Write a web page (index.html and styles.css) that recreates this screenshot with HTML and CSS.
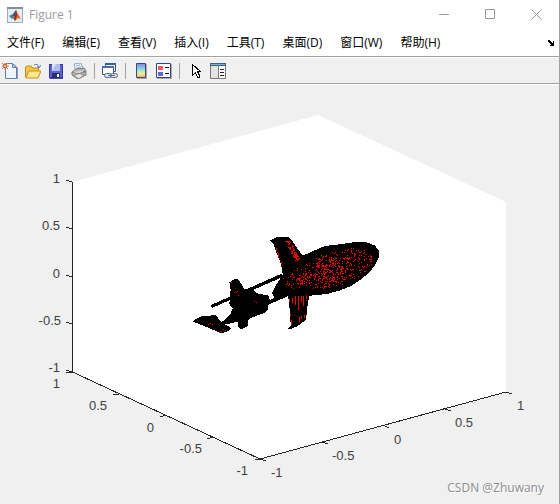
FILE: index.html
```html
<!DOCTYPE html>
<html lang="zh-CN">
<head>
<meta charset="utf-8">
<meta name="viewport" content="width=device-width, initial-scale=1">
<title>Figure 1</title>
<link rel="stylesheet" href="styles.css">
</head>
<body>
<div class="window">
  <header class="titlebar">
    <svg class="app-icon" viewBox="0 0 16 16" aria-hidden="true">
      <rect x=".5" y=".5" width="15" height="15" fill="#e9edf2" stroke="#9eabb8"/>
      <path d="M0 0h16v2H0z" fill="#78909f"/>
      <path d="M2 9l4-2 2 2-3 3z" fill="#3b82b5"/>
      <path d="M6 7l3-4 1 3-3 4z" fill="#315373"/>
      <path d="M5 12l3-3 1-6 2 4 3 5-3-1-3 3-1-2z" fill="#df6428"/>
      <path d="M9 3l1 5-2 6-1-2 1-3z" fill="#842b1d"/>
    </svg>
    <h1 class="title">Figure 1</h1>
    <div class="controls">
      <button class="control" aria-label="最小化"><svg viewBox="0 0 11 11"><path d="M0 5.500h10"/></svg></button>
      <button class="control" aria-label="最大化"><svg viewBox="0 0 11 11"><path d="M.5.5h9v9h-9z"/></svg></button>
      <button class="control" aria-label="关闭"><svg viewBox="0 0 11 11"><path d="M.5.5l10 10M10.500.5l-10 10"/></svg></button>
    </div>
  </header>
  <nav class="menubar">
    <button class="menu">文件(F)</button>
    <button class="menu">编辑(E)</button>
    <button class="menu">查看(V)</button>
    <button class="menu">插入(I)</button>
    <button class="menu">工具(T)</button>
    <button class="menu">桌面(D)</button>
    <button class="menu">窗口(W)</button>
    <button class="menu">帮助(H)</button>
    <button class="dock" aria-label="停靠"><svg viewBox="0 0 8 6" shape-rendering="crispEdges"><path d="M1 0h2v1h1v1h1v1h1V1h1v5H3V5h1V4H3V3H2V2H1V1z"/></svg></button>
  </nav>
  <div class="toolbar" role="toolbar">
    <div class="group">
      <button class="tool" aria-label="新建"><svg viewBox="0 0 16 16">
        <path d="M4 1h8l4 4v11H4z" fill="#8c9bb8"/>
        <path d="M3.500.5h7l4 4v11h-11z" fill="#edf6fd" stroke="#637dae"/>
        <path d="M10.500.5v4h4z" fill="#b8d2ef" stroke="#637dae"/>
        <path d="M0 0l6 6M6 0L0 6M3 0v7M0 3h7" stroke="#dc7652"/><circle cx="3" cy="3" r="1.500" fill="#ffe391" stroke="#ce592c"/>
      </svg></button>
      <button class="tool" aria-label="打开"><svg viewBox="0 0 16 16">
        <path d="M9 2q4-2 5 2M12 3l2 2 2-3" fill="none" stroke="#5b7fa5"/>
        <path d="M.5 14V4l2-1h4l1 2h6v9z" fill="#efc84c" stroke="#c1881e"/>
        <path d="M1 14l3-6h12l-3 7H1z" fill="#ffe987" stroke="#c58c20"/>
      </svg></button>
      <button class="tool" aria-label="保存"><svg viewBox="0 0 16 16">
        <path d="M1 1h14v15H2l-1-1z" fill="#4046b8"/><path d="M1.500 1.500h13v13h-12l-1-1z" fill="#5c62d2" stroke="#3036a0"/>
        <path d="M4 1h8v7H4z" fill="#dce5fc"/><path d="M8 1h4v7H4z" fill="#adbdf1"/>
        <path d="M4 10h8v5H4z" fill="#252f65"/><path d="M9 11h2v3H9z" fill="#fff"/>
      </svg></button>
      <button class="tool" aria-label="打印"><svg viewBox="0 0 16 16">
        <path d="M5 9L3 1l7-1 3 8z" fill="#eaf4fe" stroke="#96a7bd"/><path d="M5 3l4-1M6 5l4-1" stroke="#8daed2"/>
        <path d="M1 9l4-3 8-1 2 3v4l-8 4-6-4z" fill="#b9b9b9" stroke="#77777c"/>
        <path d="M1 9l6 2 8-3M3 13l4-3 6 2-5 4z" fill="#e6e6e3" stroke="#85858a"/><path d="M12 9h2" stroke="#547c36"/>
      </svg></button>
    </div>
    <div class="group">
      <button class="tool" aria-label="链接绘图"><svg viewBox="0 0 16 16">
        <path d="M3.500.5h10v8h-10z" fill="#edf4ff" stroke="#324f86"/><path d="M3 0h11v2H3z" fill="#3b5e9b"/>
        <path d="M.5 3.500h11v8H.5z" fill="#fff" stroke="#324f86"/><path d="M0 3h12v2H0z" fill="#4b6da7"/>
        <rect x="2.500" y="10.500" width="7" height="4" rx="2" fill="#dce6ef" stroke="#50677d"/><rect x="8.500" y="10.500" width="7" height="4" rx="2" fill="#dce6ef" stroke="#50677d"/><path d="M6 12.500h7" stroke="#50677d"/>
      </svg></button>
    </div>
    <div class="group">
      <button class="tool" aria-label="插入颜色栏"><svg viewBox="0 0 16 16">
        <defs><linearGradient id="bar" x2="0" y2="1"><stop stop-color="#9a7bdd"/><stop offset=".3" stop-color="#73c9ee"/><stop offset=".6" stop-color="#c9eeb0"/><stop offset=".8" stop-color="#ffe083"/><stop offset="1" stop-color="#f69b86"/></linearGradient></defs>
        <path d="M4 1h10v15H4z" fill="#aaa"/><path d="M3.500.5h9v14h-9z" fill="url(#bar)" stroke="#374c75"/>
      </svg></button>
      <button class="tool" aria-label="插入图例"><svg viewBox="0 0 16 16">
        <path d="M1 1h15v15H1z" fill="#aaa"/><path d="M.5.5h14v14H.5z" fill="#fafaff" stroke="#304779"/>
        <path d="M2 3h5v4H2z" fill="#e66060"/><path d="M2 9h5v4H2z" fill="#6262e6"/><path d="M9 4.500h4M9 10.500h4" stroke="#111"/>
      </svg></button>
    </div>
    <div class="group">
      <button class="tool" aria-label="编辑绘图"><svg viewBox="0 0 16 16">
        <path d="M5.500 1.500v11l3-3 2 5h2v-2l-2-4h3z" fill="#fff" stroke="#000" shape-rendering="crispEdges"/>
      </svg></button>
      <button class="tool" aria-label="属性检查器"><svg viewBox="0 0 16 16">
        <path d="M.5.5h15v15H.5z" fill="#e3e3e3" stroke="#77777a"/><path d="M0 0h16v3H0z" fill="#3c6382"/><path d="M1 1h14v1H1z" fill="#73b7d4"/>
        <path d="M9 3h6v12H9z" fill="#fff"/><path d="M8.500 3v12" stroke="#777"/><path d="M10 6.500h4M10 9.500h4M10 12.500h4" stroke="#222"/>
      </svg></button>
    </div>
  </div>
  <main class="figure">
    <svg class="plot" viewBox="0 85 559 419" role="img" aria-label="三维飞机模型">
      <path d="M72 182l246-67 188 87v190l-246 67-188-87z" fill="#fff"/>
      <path class="axis" d="M72.500 182v190L260 459l246-67M66 180l6 2M66 227l6 2M66 275l6 2M66 322l6 2M66 370l6 2M66 373l6-1M113 395l6-1M160 417l6-2M207 439l6-2M255 460l5-1l6 2M322 442l6 2M383 425l6 3M445 409l6 2M506 392l6 2"/>
      <g class="ticks end">
        <text x="60" y="183">1</text><text x="60" y="230">0.5</text><text x="60" y="278">0</text><text x="61" y="325">-0.5</text><text x="60" y="372">-1</text>
        <text x="60" y="388">1</text><text x="107" y="410">0.5</text><text x="154" y="432">0</text><text x="202" y="453">-0.5</text><text x="248" y="475">-1</text>
      </g>
      <g class="ticks">
        <text x="271" y="477">-1</text><text x="332" y="460">-0.5</text><text x="394" y="444">0</text><text x="455" y="427">0.5</text><text x="517" y="410">1</text>
      </g>
      <g transform="translate(180 225) scale(.33333)" shape-rendering="crispEdges">
        <path d="M148 172l12-7 12-5 8 10 12 22 23-2 17 15 33 7 5 13-5 15-3 18-12 7-35 13-10 7-2 18-21 11-8-9v-15l-29 7-20-5 25-22 8-20-10-13 2-22 2-20z"/>
        <path d="M93 240l212-94 5 9L96 249zM125 290l145-65 65-28v12l-65 28-140 62z"/>
        <path d="M37 289l23-14 48-5 10 15 12 10 25 15-10 8-22 7-38-17-35-14z"/>
        <path class="red" d="M153 171h3v3h-3zM162 201h3v3h-3zM168 201h3v3h-3zM171 198h3v3h-3zM174 210h3v3h-3zM222 228h3v3h-3zM228 231h3v3h-3zM69 288h3v3h-3zM84 297h3v3h-3zM90 294h3v3h-3zM96 297h3v3h-3zM117 321h3v3h-3zM123 318h3v3h-3zM129 312h3v3h-3zM135 315h3v3h-3z"/>
      </g>
      <g transform="translate(260 225) scale(.33333)" shape-rendering="crispEdges">
        <path d="M128 92l32-14 35-15 45-5 45-7 35 1 25 10 13 16v17l-13 25-15 20-25 22-30 20-40 16-35 9-50 5-60 2-30 2-15 4-9-15 6-15 13-20 13-20-2-20-6-20-10-25-8-25-12-14 25-11h31l9 10 15 23z"/>
        <path d="M85 210l63-1-6 36-4 40-28 20-24 9-2-4 8-9-2-41-4-30z"/>
        <path class="red" d="M87 222h3v9h-3zM96 219h3v15h-3zM105 213h3v27h-3zM114 213h3v42h-3zM123 213h3v18h-3zM129 213h3v30h-3zM138 210h3v12h-3zM93 285h3v15h-3zM117 276h3v15h-3zM123 273h3v9h-3zM132 270h3v9h-3zM90 267h3v6h-3z"/>
        <path class="red" id="facets"/>
      </g>
    </svg>
    <p class="credit">CSDN @Zhuwany</p>
  </main>
</div>
<script src="facets.js"></script>
</body>
</html>
```
FILE: styles.css
```css
* { box-sizing: border-box; }
body { margin: 0; background: #f0f0f0; }
button { border: 0; padding: 0; background: none; color: inherit; font: inherit; }
svg { display: block; }
.window {
  display: flex;
  flex-direction: column;
  min-height: 100vh;
  border-right: 1px solid #a0a0a0;
  background: #f0f0f0;
  color: #000;
  font: 12px/16px "Open Sans", "Noto Sans CJK SC", sans-serif;
}
.titlebar { display: flex; align-items: center; height: 29px; padding: 0 7px; background: #fff; }
.app-icon { width: 16px; height: 16px; }
.title { margin: 0 0 0 6px; color: #999; font-size: 12px; font-weight: 400; }
.controls { display: flex; gap: 14px; margin-left: auto; }
.control { display: flex; justify-content: center; width: 32px; padding: 10px 0; }
.control svg { width: 11px; height: 11px; fill: none; stroke: #999; }
.menubar { display: flex; align-items: center; gap: 18px; height: 28px; padding: 0 4px 0 7px; border-bottom: 1px solid #a0a0a0; background: #fff; }
.menu { white-space: nowrap; }
.dock { margin-left: auto; }
.dock svg { width: 8px; height: 6px; }
.toolbar { display: flex; align-items: center; height: 27px; padding-left: 2px; border-top: 1px solid #fff; border-bottom: 1px solid #a0a0a0; }
.group { display: flex; gap: 7px; }
.group + .group { margin-left: 7px; padding-left: 7px; border-left: 1px solid #a0a0a0; }
.tool svg { width: 16px; height: 16px; }
.figure { position: relative; flex: 1; border-top: 1px solid #fff; }
.plot { width: 100%; }
.axis { fill: none; stroke: #262626; shape-rendering: crispEdges; }
.ticks { fill: #404040; font: 13px "Liberation Sans", sans-serif; }
.end { text-anchor: end; }
.red { fill: #f00; }
.credit { position: absolute; right: 15px; bottom: 8px; margin: 0; color: #8c8c8c; font: 12px/16px "Open Sans", sans-serif; text-shadow: 1px 1px #fff; }
```
FILE: facets.js
```js
// Scatter the visible red mesh facets over the hull and the upper wing.
let seed = 41;
const random = () => {
  seed = (seed * 16807) % 2147483647;
  return seed / 2147483647;
};
const snap = value => Math.round(value / 3) * 3;
const cells = [];
const add = (x, y) => cells.push(`M${snap(x)} ${snap(y)}h3v3h-3z`);

const hull = (count, cx, cy, rx, ry) => {
  for (let i = 0; i < count; i++) {
    const angle = random() * Math.PI * 2;
    const radius = Math.sqrt(random());
    const u = Math.cos(angle) * radius * rx;
    const v = Math.sin(angle) * radius * ry;
    add(cx + u * 0.95 + v * 0.3, cy - u * 0.3 + v * 0.95);
  }
};
hull(330, 225, 130, 118, 52);
hull(130, 200, 133, 50, 40);
hull(50, 112, 160, 46, 30);

for (let i = 0; i < 80; i++) {
  const t = random();
  add(72 + t * 34 + random() * 16, 44 + t * 58 + random() * 7);
}
for (let i = 0; i < 18; i++) {
  const t = random();
  add(43 + t * 24, 58 + t * 66);
}
document.getElementById("facets").setAttribute("d", cells.join(""));
```
